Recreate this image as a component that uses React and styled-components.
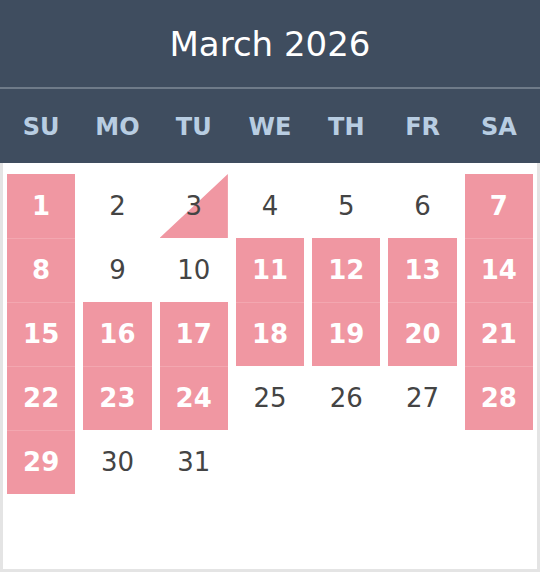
import React from "react";
import styled, { createGlobalStyle } from "styled-components";

const GlobalStyle = createGlobalStyle`
  html, body {
    margin: 0;
    padding: 0;
    background: #fff;
  }
  body {
    font-family: "DejaVu Sans", Verdana, sans-serif;
  }
`;

const PINK = "#f097a2";

const Calendar = styled.div`
  width: 540px;
  height: 572px;
  display: flex;
  flex-direction: column;
`;

const Header = styled.div`
  background: #3f4d5f;
`;

const Title = styled.div`
  height: 87px;
  display: flex;
  align-items: center;
  justify-content: center;
  color: #fff;
  font-size: 34px;
  border-bottom: 2px solid #6f7b89;
`;

const WeekRow = styled.div`
  height: 74px;
  padding: 0 3px;
  display: grid;
  grid-template-columns: repeat(7, 1fr);
  align-items: center;
`;

const WeekDay = styled.div`
  text-align: center;
  color: #b8cde2;
  font-weight: bold;
  font-size: 24px;
  padding-top: 2px;
`;

const Body = styled.div`
  flex: 1;
  border: 3px solid #e4e4e4;
  border-top: none;
  padding-top: 11px;
  display: grid;
  grid-template-columns: repeat(7, 1fr);
  grid-auto-rows: 64px;
  align-content: start;
`;

const Day = styled.div`
  position: relative;
  margin: 0 4px;
  display: flex;
  align-items: center;
  justify-content: center;
  font-size: 26px;
  color: ${(p) => (p.$pink ? "#fff" : "#444")};
  font-weight: ${(p) => (p.$pink ? "bold" : "normal")};
  background: ${(p) => (p.$pink ? PINK : "transparent")};
  box-shadow: ${(p) => (p.$joined ? "inset 0 1px 0 #f3a7b0" : "none")};

  &::before {
    content: "";
    display: ${(p) => (p.$half ? "block" : "none")};
    position: absolute;
    inset: 0;
    background: ${PINK};
    clip-path: polygon(100% 0, 100% 100%, 0 100%);
  }
`;

const Num = styled.span`
  position: relative;
`;

const pink = new Set([1, 7, 8, 11, 12, 13, 14, 15, 16, 17, 18, 19, 20, 21, 22, 23, 24, 28, 29]);
const days = ["SU", "MO", "TU", "WE", "TH", "FR", "SA"];

export default function App() {
  const cells = [];
  for (let d = 1; d <= 31; d++) cells.push(d);

  return (
    <Calendar>
      <GlobalStyle />
      <Header>
        <Title>March 2026</Title>
        <WeekRow>
          {days.map((d) => (
            <WeekDay key={d}>{d}</WeekDay>
          ))}
        </WeekRow>
      </Header>
      <Body>
        {cells.map((d) => (
          <Day
            key={d}
            $pink={pink.has(d)}
            $joined={pink.has(d) && pink.has(d - 7)}
            $half={d === 3}
          >
            <Num>{d}</Num>
          </Day>
        ))}
      </Body>
    </Calendar>
  );
}
